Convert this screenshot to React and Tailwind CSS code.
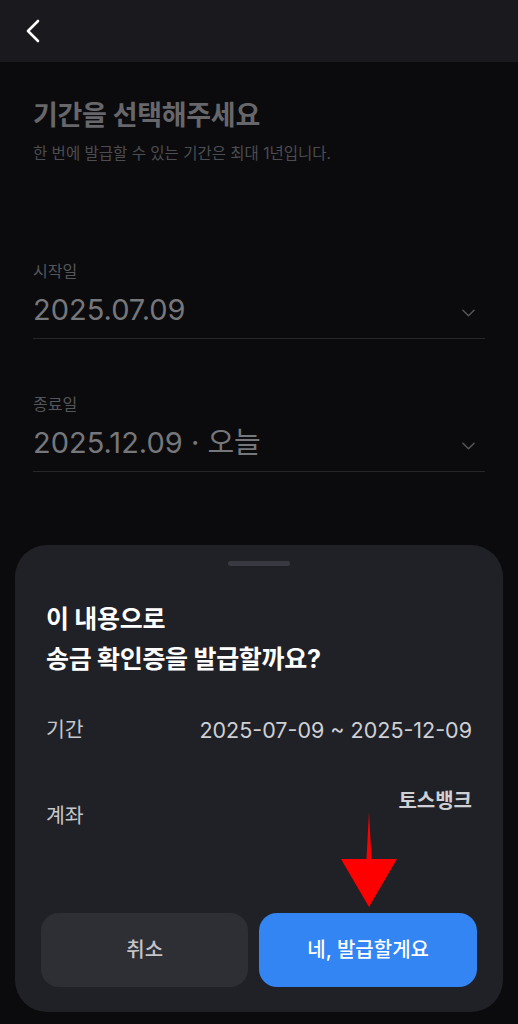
import React from "react";

const font = { fontFamily: '"Inter", "Noto Sans CJK KR", sans-serif' };

const Chevron = ({ className }) => (
  <svg viewBox="0 0 14 8" className={className} fill="none" stroke="currentColor" strokeWidth="1.6" strokeLinecap="round" strokeLinejoin="round">
    <path d="M1 1l6 6 6-6" />
  </svg>
);

const DateField = ({ label, value, className }) => (
  <div className={className}>
    <p className="text-[16px] leading-[22px] text-[#55565a]">{label}</p>
    <div className="mt-[10px] flex items-center justify-between border-b border-[#26272a] pb-[10px]">
      <span className="text-[29px] leading-[36px] text-[#76777b]">{value}</span>
      <Chevron className="w-[13px] h-[8px] mr-[10px] mt-[6px] text-[#55565a]" />
    </div>
  </div>
);

export default function App() {
  return (
    <div className="w-[518px] h-[1024px] bg-[#0b0b0d] flex flex-col overflow-hidden" style={font}>
      <header className="h-[62px] bg-[#1a1a1e] flex items-center px-[26px] shrink-0">
        <svg viewBox="0 0 14 24" className="w-[14px] h-[24px]" fill="none" stroke="#ffffff" strokeWidth="2.6" strokeLinecap="round" strokeLinejoin="round">
          <path d="M12 2L2 12l10 10" />
        </svg>
      </header>

      <main className="px-[33px] pt-[35px]">
        <h1 className="text-[27px] leading-[38px] font-bold text-[#67676b] tracking-[-0.3px]">기간을 선택해주세요</h1>
        <p className="mt-[8px] text-[15.5px] leading-[22px] text-[#4c4d51]">한 번에 발급할 수 있는 기간은 최대 1년입니다.</p>

        <DateField className="mt-[95px]" label="시작일" value="2025.07.09" />
        <DateField className="mt-[54px]" label="종료일" value="2025.12.09 · 오늘" />
      </main>

      <section className="mt-auto mx-[15px] mb-[12px] h-[467px] rounded-[32px] bg-[#202127] flex flex-col px-[26px] pb-[25px]">
        <div className="flex justify-center pt-[16px]">
          <div className="w-[62px] h-[5px] rounded-full bg-[#393a41]" />
        </div>
        <h2 className="mt-[33px] px-[5px] text-[25px] leading-[40px] font-bold text-white tracking-[-0.3px]">
          이 내용으로
          <br />
          송금 확인증을 발급할까요?
        </h2>

        <div className="mt-[37px] px-[5px] flex items-center justify-between">
          <span className="text-[20.5px] leading-[28px] text-[#c6c7cb]">기간</span>
          <span className="text-[21.5px] leading-[28px] text-[#cfd0d4]">2025-07-09 ~ 2025-12-09</span>
        </div>

        <div className="mt-[44px] px-[5px] flex justify-between items-start">
          <span className="mt-[14px] text-[20.5px] leading-[28px] text-[#c6c7cb]">계좌</span>
          <span className="text-[20px] leading-[26px] font-bold text-[#cfd0d4]">토스뱅크</span>
        </div>

        <div className="relative mt-auto flex gap-[11px]">
          <button type="button" className="flex-1 h-[74px] rounded-[18px] bg-[#2e2f35] text-[20px] font-medium text-[#c4c5c9]">취소</button>
          <button type="button" className="flex-[1.05] h-[74px] rounded-[18px] bg-[#3385f4] text-[20px] font-medium text-white">네, 발급할게요</button>
          <svg viewBox="0 0 56 96" className="absolute left-[300px] top-[-101px] w-[56px] h-[96px]" fill="#ff0000">
            <path d="M28 0L30.5 47H56L28 95L0 47H25.5Z" />
          </svg>
        </div>
      </section>
    </div>
  );
}
